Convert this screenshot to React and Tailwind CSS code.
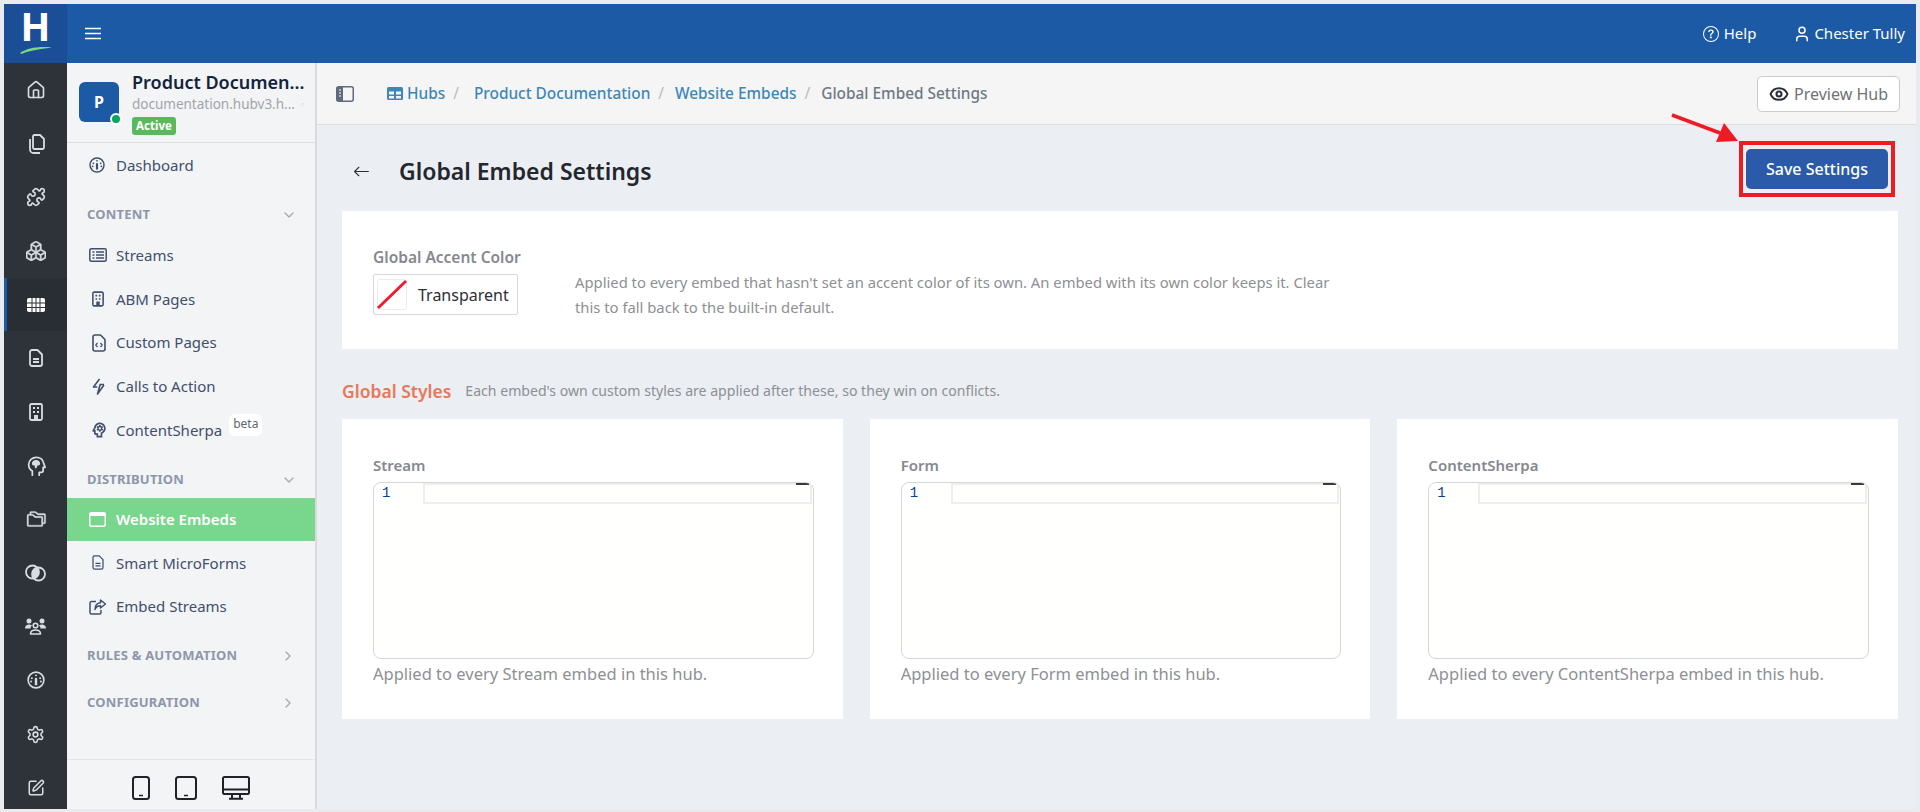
import { BsBoxes, BsBoxArrowUpRight, BsQuestionCircle, BsArrowLeft } from "react-icons/bs";
import { LuHouse, LuPuzzle, LuChevronDown, LuChevronRight, LuUser, LuSquarePen, LuSettings, LuEye } from "react-icons/lu";
import { MdOutlinePsychology } from "react-icons/md";
import { PiFolders } from "react-icons/pi";

const Gauge = ({ size = 18 }) => (
    <svg width={size} height={size} viewBox="0 0 24 24" fill="none" stroke="currentColor" strokeWidth="2.200" strokeLinecap="round">
        <circle cx="12" cy="12" r="10.500" />
        <path d="M12 10.500v7" strokeWidth="3.200" />
        <path d="M6.500 9.500h.01M17.500 9.500h.01M12 5.800h.01M5.500 14h.01M18.500 14h.01" strokeWidth="2.600" />
    </svg>
);

const Grid = () => (
    <svg width="18" height="14" viewBox="0 0 18 14" fill="none">
        <rect width="18" height="14" rx="2" fill="#fff" />
        <path d="M0 5h18M0 9.500h18M5 0v14M9 0v14M13 0v14" stroke="#2d3339" strokeWidth="1" />
    </svg>
);

const CopyIcon = () => (
    <svg width="18" height="20" viewBox="0 0 18 20" fill="none" stroke="currentColor" strokeWidth="1.800" strokeLinejoin="round">
        <path d="M6 2.500A1.500 1.500 0 0 1 7.500 1H13l4 4v8.500a1.500 1.500 0 0 1-1.500 1.500h-8A1.500 1.500 0 0 1 6 13.500z" />
        <path d="M3 5v10.500A3.500 3.500 0 0 0 6.500 19H13" />
    </svg>
);

const FileLines = ({ width = 14, height = 18, strokeWidth = 1.800 }) => (
    <svg width={width} height={height} viewBox="0 0 14 18" fill="none" stroke="currentColor" strokeWidth={strokeWidth} strokeLinejoin="round">
        <path d="M1 3a2 2 0 0 1 2-2h5.500L13 5.500V15a2 2 0 0 1-2 2H3a2 2 0 0 1-2-2z" />
        <path d="M4 10h6M4 13h6" />
    </svg>
);

const FileCode = () => (
    <svg width="14" height="18" viewBox="0 0 14 18" fill="none" stroke="currentColor" strokeWidth="1.600" strokeLinejoin="round">
        <path d="M1 3a2 2 0 0 1 2-2h5.500L13 5.500V15a2 2 0 0 1-2 2H3a2 2 0 0 1-2-2z" />
        <path d="M5.500 9L3.800 11l1.700 2M8.500 9l1.700 2-1.700 2" strokeWidth="1.200" />
    </svg>
);

const Building = ({ width = 14, height = 18 }) => (
    <svg width={width} height={height} viewBox="0 0 14 18" fill="none">
        <rect x="1" y="1" width="12" height="16" rx="1.500" stroke="currentColor" strokeWidth="1.800" />
        <path d="M4 4h2v2H4zM8 4h2v2H8zM4 8h2v2H4zM8 8h2v2H8zM5 12h4v5H5z" fill="currentColor" />
    </svg>
);

const HeadBrain = () => (
    <svg width="22" height="22" viewBox="0 0 24 24" fill="none" stroke="currentColor" strokeWidth="1.900" strokeLinejoin="round" strokeLinecap="round">
        <path d="M8 22v-4.500C5.500 15.800 4 13.300 4 10.500 4 6 7.800 2.500 12.500 2.500c4.200 0 7.300 2.800 7.800 6.500l1.700 4.500h-2.200V17a2 2 0 0 1-2 2h-2.300v3" />
        <path d="M7.500 9.500C7.500 7 9.500 5.500 12 5.500s4.500 1.500 4.500 4c0 1.500-1.500 2-3 2l-1 3h-1.500l-.5-3c-1.500 0-3-.5-3-2z" fill="currentColor" stroke="none" />
    </svg>
);

const Circles = () => (
    <svg width="21" height="18" viewBox="0 0 21 18" fill="none" stroke="currentColor" strokeWidth="1.800">
        <clipPath id="lens-clip"><circle cx="7.500" cy="8" r="6.500" /></clipPath>
        <circle cx="13.500" cy="10" r="6.500" fill="currentColor" clipPath="url(#lens-clip)" stroke="none" />
        <circle cx="7.500" cy="8" r="6.500" />
        <circle cx="13.500" cy="10" r="6.500" />
    </svg>
);

const Users = () => (
    <svg width="21" height="17" viewBox="0 0 21 17" fill="none">
        <circle cx="4" cy="3" r="2.500" fill="currentColor" />
        <circle cx="17" cy="3" r="2.500" fill="currentColor" />
        <path d="M0 10.500C0 7.500 2 6.500 4 6.500c1.300 0 2.300.3 3 1-1 .8-1.500 1.800-1.500 3zM21 10.500c0-3-2-4-4-4-1.300 0-2.300.3-3 1 1 .8 1.500 1.800 1.500 3z" fill="currentColor" />
        <circle cx="10.500" cy="7.500" r="2.300" stroke="currentColor" strokeWidth="1.600" />
        <path d="M5.500 16c0-2.800 2.200-4 5-4s5 1.200 5 4z" stroke="currentColor" strokeWidth="1.600" strokeLinejoin="round" />
    </svg>
);

const ListIcon = () => (
    <svg width="18" height="14" viewBox="0 0 18 14" fill="none" stroke="currentColor">
        <rect x="0.800" y="0.800" width="16.400" height="12.400" rx="1.500" strokeWidth="1.500" />
        <path d="M3.500 4h2M3.500 7h2M3.500 10h2M7 4h8M7 7h8M7 10h8" strokeWidth="1.400" />
    </svg>
);

const Bolt = () => (
    <svg width="13" height="17" viewBox="0 0 13 17" fill="none" stroke="currentColor" strokeWidth="1.600" strokeLinejoin="round">
        <path d="M7.500 1L1.500 9h3.800" />
        <path d="M12 6.500H8.200L5.500 16 12 7" />
    </svg>
);

const WindowIcon = () => (
    <svg width="17" height="15" viewBox="0 0 17 15" fill="none">
        <rect x="0.750" y="0.750" width="15.500" height="13.500" rx="1.500" stroke="#fff" strokeWidth="1.500" />
        <rect x="1" y="1" width="15" height="3" fill="#fff" />
    </svg>
);

const ShareBox = () => (
    <svg width="18" height="16" viewBox="0 0 18 16" fill="none" stroke="currentColor" strokeWidth="1.500" strokeLinejoin="round">
        <path d="M7 2.500H2.500a1.500 1.500 0 0 0-1.500 1.500v9.500a1.500 1.500 0 0 0 1.500 1.500h8a1.500 1.500 0 0 0 1.500-1.500V11" />
        <path d="M11.500 1l5 4-5 4V6.800c-3 0-4.500 1.200-5.500 3.700 0-4 2-6.500 5.500-6.800z" />
    </svg>
);

const Phone = () => (
    <svg width="18" height="24" viewBox="0 0 18 24" fill="none" stroke="#1f2329" strokeWidth="2">
        <rect x="1" y="1" width="16" height="22" rx="2.500" />
        <path d="M7 19.500h4" strokeWidth="1.500" />
    </svg>
);

const Tablet = () => (
    <svg width="22" height="24" viewBox="0 0 22 24" fill="none" stroke="#1f2329" strokeWidth="2">
        <rect x="1" y="1" width="20" height="22" rx="2.500" />
        <path d="M9 19.500h4" strokeWidth="1.500" />
    </svg>
);

const Desktop = () => (
    <svg width="28" height="24" viewBox="0 0 28 24" fill="none" stroke="#1f2329" strokeWidth="2">
        <rect x="1" y="1" width="26" height="17" rx="1.500" />
        <path d="M1 13.500h26" />
        <path d="M10 18v4M18 18v4M7 22.800h14" />
    </svg>
);

const SidebarToggle = () => (
    <svg width="18" height="16" viewBox="0 0 18 16" fill="none">
        <rect x="0.750" y="0.750" width="16.500" height="14.500" rx="2" stroke="#5f6b7a" strokeWidth="1.500" />
        <rect x="1" y="1" width="6" height="14" fill="#5f6b7a" />
        <path d="M3 4h2M3 7h2M3 10h2" stroke="#fff" strokeWidth="1" />
    </svg>
);

const HubsIcon = () => (
    <svg width="16" height="13" viewBox="0 0 16 13" fill="none">
        <rect width="16" height="13" rx="1.500" fill="#3d87b8" />
        <rect x="2" y="4.500" width="5" height="3" fill="#f5f5f5" />
        <rect x="9" y="4.500" width="5" height="3" fill="#f5f5f5" />
        <rect x="2" y="9" width="5" height="2.500" fill="#f5f5f5" />
        <rect x="9" y="9" width="5" height="2.500" fill="#f5f5f5" />
    </svg>
);

const Hamburger = () => (
    <svg width="16" height="13" viewBox="0 0 16 13" stroke="#fff" strokeWidth="1.600">
        <path d="M0 1.500h16M0 6.500h16M0 11.500h16" />
    </svg>
);

const rail = [
    { icon: <LuHouse size={20} /> },
    { icon: <CopyIcon /> },
    { icon: <LuPuzzle size={20} /> },
    { icon: <BsBoxes size={20} className="stroke-[0.4]" /> },
    { icon: <Grid />, active: true },
    { icon: <FileLines /> },
    { icon: <Building /> },
    { icon: <HeadBrain /> },
    { icon: <PiFolders size={22} className="stroke-[4]" /> },
    { icon: <Circles /> },
    { icon: <Users /> },
    { icon: <Gauge size={18} /> },
    { icon: <LuSettings size={19} /> },
    { icon: <LuSquarePen size={18} /> },
];

const NavItem = ({ icon, label, extra }) => (
    <div className="flex items-center h-[43.750px] pl-[22px] pt-[1px] text-[#3f4f6c] text-[15px]">
        <span className="w-[27px] flex items-center">{icon}</span>
        <span>{label}</span>
        {extra}
    </div>
);

const SectionHead = ({ label, open, className }) => (
    <div className={`flex items-end justify-between pl-[20px] pt-[1px] text-[13px] font-bold tracking-[0.2px] text-[#8e97a9] ${open ? "pr-[18px]" : "pr-[19px]"} ${className}`}>
        <span className="h-[36px] flex items-center">{label}</span>
        <span className="h-[36px] flex items-center text-[#a3aab7]">
            {open ? <LuChevronDown size={16} /> : <LuChevronRight size={16} />}
        </span>
    </div>
);

const EditorCard = ({ label, help }) => (
    <div className="bg-white pl-[31px] pr-[29px] pt-[36px] h-[300px]">
        <div className="text-[15px] font-semibold text-[#85898f] h-[27px] leading-[20px]">{label}</div>
        <div className="relative h-[177px] border border-[#d4d6d9] rounded-[8px] bg-[#fffffe] overflow-hidden">
            <div className="flex h-[21px]">
                <div className="w-[49px] pl-[8px] text-[14px] leading-[21px] font-medium text-[#0b3d8f] font-['Liberation_Mono',monospace]">1</div>
                <div className="flex-1 border-2 border-[#eeeeee] mr-[1px]"></div>
            </div>
            <div className="absolute top-0 right-[4px] w-[13px] h-[2px] bg-[#3a3a3a]"></div>
        </div>
        <div className="text-[16.500px] text-[#8d9094] mt-[4px] leading-[22px]">{help}</div>
    </div>
);

const Separator = ({ wide }) => <span className={`ml-[8px] text-[#b7bbc0] ${wide ? "mr-[15px]" : "mr-[11px]"}`}>/</span>;

const App = () => {
    return (
        <div className="relative h-[812px] bg-[#e9ebef] pt-[4px] px-[4px] pb-[3px] overflow-hidden font-['Noto_Sans',sans-serif]">
            <div className="h-full flex flex-col">
                <header className="h-[59px] shrink-0 flex items-center bg-[#1c5aa6] text-white">
                    <div className="w-[63px] h-full bg-[#1a4f97] flex flex-col items-center">
                        <span className="text-[39px] font-bold leading-[42px] mt-[1px]">H</span>
                        <svg width="34" height="8" viewBox="0 0 34 8" className="-mt-[1px]">
                            <path d="M1 7C8 2 20 0 33 1.500 24 2.500 12 4 2.500 8z" fill="#7ed67e" />
                        </svg>
                    </div>
                    <div className="ml-[18px]"><Hamburger /></div>
                    <div className="ml-auto flex items-center text-[15px] pr-[11px]">
                        <BsQuestionCircle size={16} />
                        <span className="ml-[5px]">Help</span>
                        <LuUser size={18} className="ml-[37px]" />
                        <span className="ml-[3px]">Chester Tully</span>
                    </div>
                </header>

                <div className="flex-1 flex min-h-0">
                    <nav className="w-[63px] shrink-0 bg-[#2d3339] text-[#d8dde3] overflow-hidden">
                        {rail.map((item, i) => (
                            <div key={i} className={`h-[53.700px] flex items-center justify-center ${item.active ? "bg-[#292e34] border-l-[3px] border-[#1c5aa6] pr-[3px]" : ""}`}>
                                {item.icon}
                            </div>
                        ))}
                    </nav>

                    <aside className="w-[250px] shrink-0 bg-[#f3f4f6] border-r-2 border-[#d9dadd] flex flex-col">
                        <div className="h-[80px] shrink-0 border-b border-[#dcdee2] flex pl-[12px] pt-[8px]">
                            <div className="relative w-[40px] h-[40px] mt-[11px] rounded-[6px] bg-[#1c5aa6] text-white text-[16px] font-bold flex items-center justify-center">
                                P
                                <span className="absolute -right-[3px] -bottom-[3px] w-[12px] h-[12px] rounded-full bg-[#0aa45a] border-2 border-white"></span>
                            </div>
                            <div className="ml-[13px] w-[172px]">
                                <div className="text-[18px] leading-[22px] font-semibold text-[#14233c] whitespace-nowrap">Product Documen...</div>
                                <div className="flex items-center text-[13.500px] leading-[22px] text-[#a1a5ab] whitespace-nowrap">
                                    documentation.hubv3.h...
                                    <BsBoxArrowUpRight size={11} className="ml-[6px] text-[#c3c6ca]" />
                                </div>
                                <span className="block mt-[2px] w-[44px] h-[18px] rounded-[3px] bg-[#5cb85c] text-white text-[11.500px] font-bold leading-[18px] text-center">Active</span>
                            </div>
                        </div>
                        <NavItem icon={<Gauge size={16} />} label="Dashboard" />
                        <SectionHead label="CONTENT" open className="h-[46px]" />
                        <NavItem icon={<ListIcon />} label="Streams" />
                        <NavItem icon={<span className="ml-[3px] flex"><Building width={12} height={16} /></span>} label="ABM Pages" />
                        <NavItem icon={<span className="ml-[3px] flex"><FileCode /></span>} label="Custom Pages" />
                        <NavItem icon={<span className="ml-[3px] flex"><Bolt /></span>} label="Calls to Action" />
                        <NavItem
                            icon={<MdOutlinePsychology size={20} />}
                            label="ContentSherpa"
                            extra={<span className="self-start mt-[5px] ml-[7px] px-[4px] h-[22px] rounded-[6px] bg-white text-[12px] leading-[20px] text-[#5d6673]">beta</span>}
                        />
                        <SectionHead label="DISTRIBUTION" open className="h-[46px]" />
                        <div className="flex items-center h-[43px] pl-[22px] pt-[1px] bg-[#79d68d] text-white text-[15px] font-semibold">
                            <span className="w-[27px] flex items-center"><WindowIcon /></span>
                            <span>Website Embeds</span>
                        </div>
                        <NavItem icon={<span className="ml-[3px] flex"><FileLines width={12} height={15} strokeWidth={1.500} /></span>} label="Smart MicroForms" />
                        <NavItem icon={<ShareBox />} label="Embed Streams" />
                        <SectionHead label="RULES & AUTOMATION" className="h-[46px]" />
                        <SectionHead label="CONFIGURATION" className="h-[47px]" />
                        <div className="flex-1"></div>
                        <div className="h-[50px] shrink-0 border-t border-[#e3e5e8] flex items-center justify-center gap-[25px] pt-[6px]">
                            <Phone />
                            <Tablet />
                            <Desktop />
                        </div>
                    </aside>

                    <main className="flex-1 min-w-0 flex flex-col bg-[#ebeef3]">
                        <div className="h-[62px] shrink-0 bg-[#f5f5f5] border-b border-[#dcdcdc] flex items-center pl-[19px] pr-[16px]">
                            <SidebarToggle />
                            <div className="ml-[33px] flex items-center text-[15.400px]">
                                <HubsIcon />
                                <span className="ml-[4px] text-[#3d87b8] font-medium">Hubs</span>
                                <Separator wide />
                                <span className="text-[#3d87b8] font-medium">Product Documentation</span>
                                <Separator />
                                <span className="text-[#3d87b8] font-medium">Website Embeds</span>
                                <Separator />
                                <span className="text-[#6f7985] font-medium">Global Embed Settings</span>
                            </div>
                            <button className="ml-auto w-[143px] h-[36px] bg-white border border-[#c9cbce] rounded-[5px] flex items-center justify-center text-[16px] text-[#6d7277]">
                                <LuEye size={20} strokeWidth={2.500} className="text-[#2b2f36] mr-[5px]" />
                                Preview Hub
                            </button>
                        </div>

                        <div className="flex-1 pl-[25px] pr-[18px]">
                            <div className="h-[86px] pt-[6px] flex items-center">
                                <BsArrowLeft size={17} className="ml-[11px] text-[#2b2f36]" />
                                <h1 className="ml-[29px] text-[23px] font-semibold text-[#23272d]">Global Embed Settings</h1>
                                <div className="ml-auto mr-[3px] -mt-[4px] border-4 border-[#ed1c24] px-[3px] py-[4px]">
                                    <button className="block w-[142px] h-[40px] rounded-[5px] bg-[#2a5aa8] text-white text-[16px] font-medium">Save Settings</button>
                                </div>
                            </div>

                            <section className="h-[138px] bg-white pl-[31px] pt-[36px] flex">
                                <div className="w-[202px] shrink-0">
                                    <div className="text-[15.500px] font-semibold text-[#85898f] leading-[20px] h-[27px]">Global Accent Color</div>
                                    <div className="w-[145px] h-[41px] border border-[#d7d8da] rounded-[2px] flex items-center pl-[3px]">
                                        <svg width="30" height="31" viewBox="0 0 30 31">
                                            <rect x="0.500" y="0.500" width="29" height="30" rx="2" fill="#fff" stroke="#ececec" />
                                            <path d="M1 29L29 2" stroke="#ed1c2e" strokeWidth="3" />
                                        </svg>
                                        <span className="ml-[11px] text-[16px] text-[#2b2f36]">Transparent</span>
                                    </div>
                                </div>
                                <p className="w-[770px] mt-[23px] text-[14.800px] leading-[25px] text-[#8d9094]">
                                    Applied to every embed that hasn't set an accent color of its own. An embed with its own color keeps it. Clear this to fall back to the built-in default.
                                </p>
                            </section>

                            <div className="h-[70px] flex items-center pt-[14px] gap-[14px]">
                                <h2 className="text-[17.500px] font-semibold text-[#e8775b]">Global Styles</h2>
                                <span className="text-[14.100px] text-[#8d9094]">Each embed's own custom styles are applied after these, so they win on conflicts.</span>
                            </div>

                            <div className="grid grid-cols-3 gap-[27px]">
                                <EditorCard label="Stream" help="Applied to every Stream embed in this hub." />
                                <EditorCard label="Form" help="Applied to every Form embed in this hub." />
                                <EditorCard label="ContentSherpa" help="Applied to every ContentSherpa embed in this hub." />
                            </div>
                        </div>
                    </main>
                </div>
            </div>

            {/* annotation arrow over the save button */}
            <svg className="absolute left-[1670px] top-[112px]" width="72" height="32" viewBox="0 0 72 32">
                <path d="M2 3L50 21" stroke="#ed1c24" strokeWidth="3.500" />
                <path d="M68 29L46 30 54 11z" fill="#ed1c24" />
            </svg>
        </div>
    );
};

export default App;
